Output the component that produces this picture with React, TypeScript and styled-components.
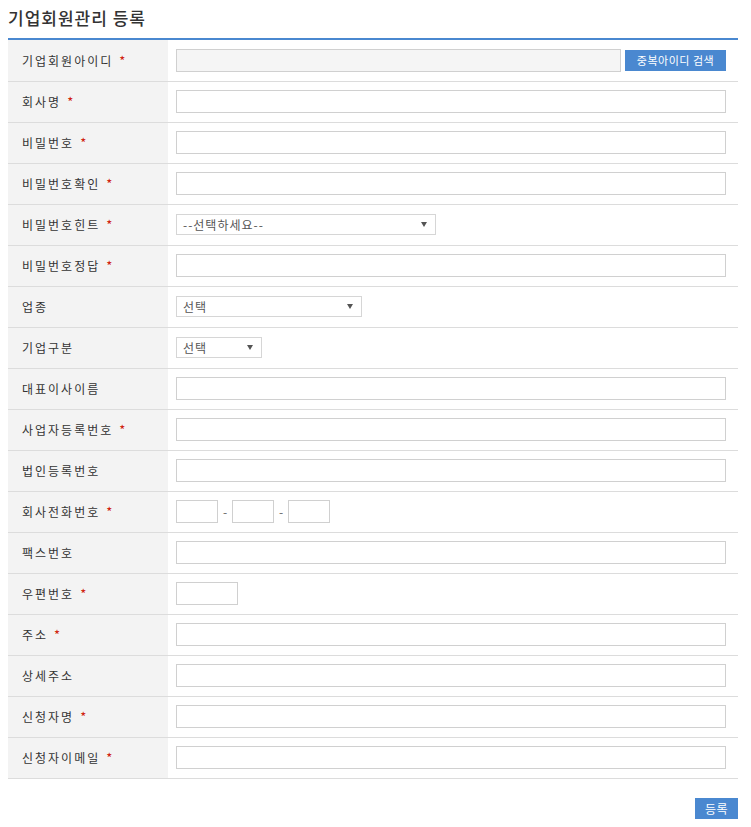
import styled, { createGlobalStyle } from 'styled-components';

const GlobalStyle = createGlobalStyle`
    * {
        box-sizing: border-box;
    }

    body {
        margin: 0;
        background: #fff;
        font-family: 'Noto Sans CJK KR', 'Noto Sans', sans-serif;
        color: #333;
    }
`;

const Page = styled.div`
    padding: 8px 13px 8px 8px;
`;

const Title = styled.h2`
    margin: 0;
    padding-bottom: 10px;
    font-size: 17px;
    line-height: 20px;
    font-weight: 500;
    letter-spacing: 1px;
    color: #333;
    border-bottom: 2px solid #4a88d0;
`;

const Table = styled.table`
    width: 100%;
    table-layout: fixed;
    border-collapse: collapse;
`;

const LabelCol = styled.col`
    width: 160px;
`;

const Row = styled.tr`
    border-bottom: 1px solid #dcdcdc;
`;

const Th = styled.th`
    height: 41px;
    padding: 0 0 0 14px;
    background: #f3f3f3;
    text-align: left;
    font-size: 12px;
    font-weight: 400;
    letter-spacing: 2px;
    white-space: nowrap;
    color: #333;
`;

const Required = styled.span`
    margin-left: 6px;
    color: #d01c0c;
    font-size: 13px;
`;

const Td = styled.td`
    height: 41px;
    padding: 0 12px 0 8px;
`;

const Field = styled.div`
    display: flex;
    align-items: center;
    gap: 4px;
`;

const Input = styled.input<{ $width?: number; $readOnly?: boolean }>`
    display: block;
    flex: none;
    width: ${(p) => (p.$width ? `${p.$width}px` : '100%')};
    height: 23px;
    padding: 0 6px;
    border: 1px solid #d0d0d0;
    background: ${(p) => (p.$readOnly ? '#f5f5f5' : '#fff')};
    font-family: inherit;
    font-size: 12px;

    &:focus {
        outline: none;
    }
`;

const Button = styled.button`
    height: 21px;
    padding: 0;
    border: none;
    background: #4a88d0;
    color: #fff;
    font-family: inherit;
    font-size: 11px;
    letter-spacing: 0.5px;
    cursor: pointer;
`;

const SearchButton = styled(Button)`
    width: 103px;
`;

const SelectBox = styled.div<{ $width: number }>`
    position: relative;
    width: ${(p) => p.$width}px;
    height: 21px;
    padding: 0 6px;
    border: 1px solid #d6d6d6;
    background: #fff;
    font-size: 12px;
    line-height: 19px;
    letter-spacing: 1px;
    color: #555;

    &::after {
        content: '';
        position: absolute;
        right: 8px;
        top: 7px;
        border-left: 3px solid transparent;
        border-right: 3px solid transparent;
        border-top: 5px solid #555;
    }
`;

const Dash = styled.span`
    width: 6px;
    text-align: center;
    font-size: 12px;
    color: #666;
`;

const Footer = styled.div`
    display: flex;
    justify-content: flex-end;
    padding-top: 19px;
`;

const SubmitButton = styled(Button)`
    width: 43px;
    font-size: 12px;
`;

type FieldRow = {
    label: string;
    required?: boolean;
    kind?: 'text' | 'id' | 'select' | 'phone' | 'zip';
    width?: number;
    placeholder?: string;
};

const rows: FieldRow[] = [
    { label: '기업회원아이디', required: true, kind: 'id' },
    { label: '회사명', required: true },
    { label: '비밀번호', required: true },
    { label: '비밀번호확인', required: true },
    { label: '비밀번호힌트', required: true, kind: 'select', width: 260, placeholder: '--선택하세요--' },
    { label: '비밀번호정답', required: true },
    { label: '업종', kind: 'select', width: 186, placeholder: '선택' },
    { label: '기업구분', kind: 'select', width: 86, placeholder: '선택' },
    { label: '대표이사이름' },
    { label: '사업자등록번호', required: true },
    { label: '법인등록번호' },
    { label: '회사전화번호', required: true, kind: 'phone' },
    { label: '팩스번호' },
    { label: '우편번호', required: true, kind: 'zip' },
    { label: '주소', required: true },
    { label: '상세주소' },
    { label: '신청자명', required: true },
    { label: '신청자이메일', required: true },
];

const renderField = (row: FieldRow) => {
    switch (row.kind) {
        case 'id':
            return (
                <Field>
                    <Input $width={445} $readOnly readOnly />
                    <SearchButton type="button">중복아이디 검색</SearchButton>
                </Field>
            );
        case 'select':
            return <SelectBox $width={row.width ?? 100}>{row.placeholder}</SelectBox>;
        case 'phone':
            return (
                <Field>
                    <Input $width={42} />
                    <Dash>-</Dash>
                    <Input $width={42} />
                    <Dash>-</Dash>
                    <Input $width={42} />
                </Field>
            );
        case 'zip':
            return <Input $width={62} />;
        default:
            return <Input />;
    }
};

const CompanyMemberForm = () => {
    return (
        <Page>
            <GlobalStyle />
            <Title>기업회원관리 등록</Title>
            <Table>
                <colgroup>
                    <LabelCol />
                    <col />
                </colgroup>
                <tbody>
                    {rows.map((row) => (
                        <Row key={row.label}>
                            <Th>
                                {row.label}
                                {row.required && <Required>*</Required>}
                            </Th>
                            <Td>{renderField(row)}</Td>
                        </Row>
                    ))}
                </tbody>
            </Table>
            <Footer>
                <SubmitButton type="submit">등록</SubmitButton>
            </Footer>
        </Page>
    );
};

export default CompanyMemberForm;
